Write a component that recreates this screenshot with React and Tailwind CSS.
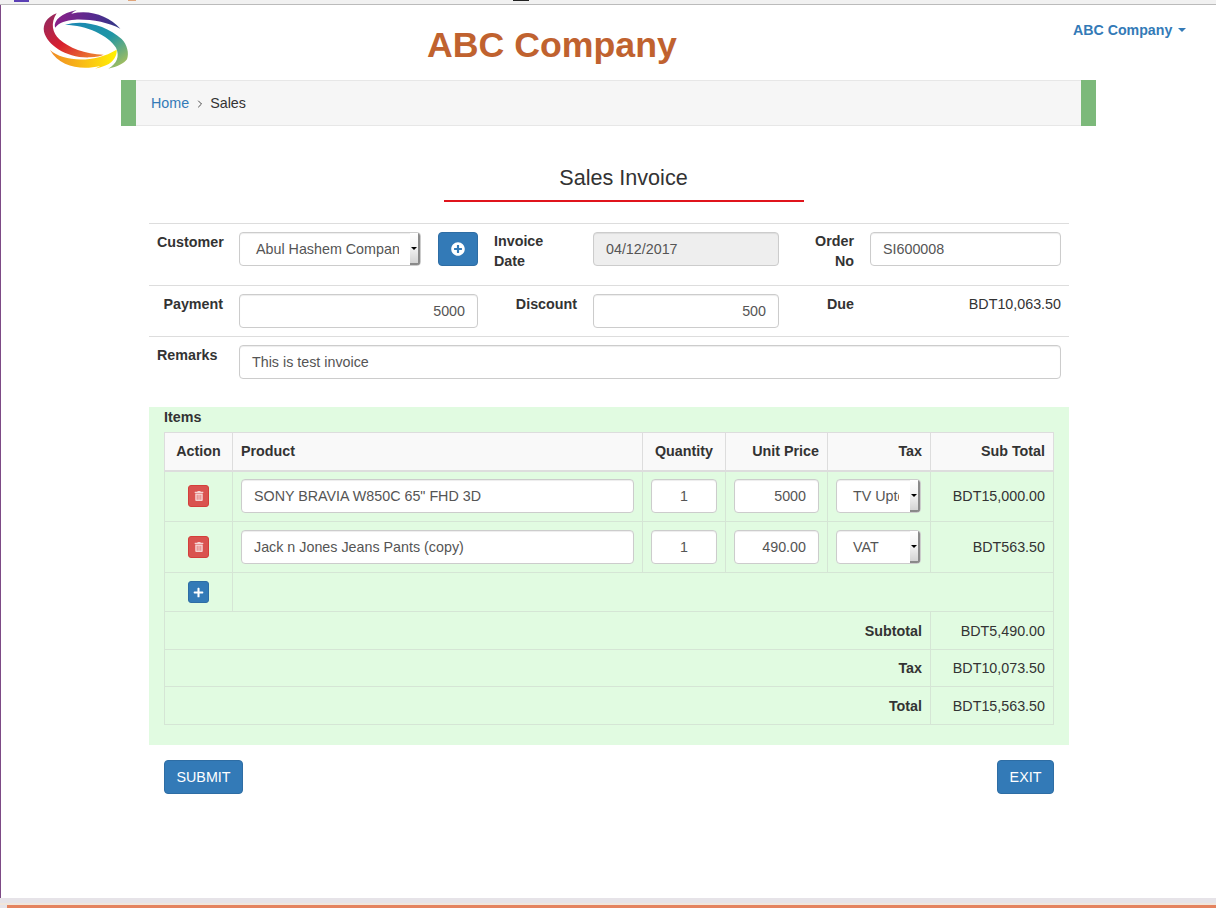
import React from 'react';
import { FaTrashAlt, FaPlus, FaPlusCircle } from 'react-icons/fa';
import { ChevronRight } from 'lucide-react';

const boxCls = 'h-[34px] rounded border border-[#ccc] px-3 text-[14.3px] leading-[32px] text-[#555] shadow-[inset_0_1px_1px_rgba(0,0,0,0.075)]';
const inputCls = `${boxCls} bg-white`;
const labelCls = 'text-[14.3px] font-bold leading-[20px] text-[#333]';
const cellCls = 'border border-[#d5e5d5] px-2';
const textCellCls = 'border border-[#d5e5d5] px-2 text-right text-[14.3px] leading-[20px] text-[#333]';
const blueBtnCls = 'flex h-[34px] items-center justify-center rounded border border-[#2e6da4] bg-[#337ab7] pt-px text-[14.3px] text-white';

function Logo() {
  return (
    <svg width="95" height="70" viewBox="0 0 285 210" className="block">
      <defs>
        <linearGradient id="lgTop" x1="0" y1="0" x2="1" y2="0">
          <stop offset="0" stopColor="#8a2088" />
          <stop offset="0.6" stopColor="#552a8f" />
          <stop offset="1" stopColor="#2f3a86" />
        </linearGradient>
        <linearGradient id="lgRight" x1="0" y1="0" x2="1" y2="1">
          <stop offset="0" stopColor="#1a86b4" />
          <stop offset="0.5" stopColor="#1f96a6" />
          <stop offset="1" stopColor="#bcc650" />
        </linearGradient>
        <linearGradient id="lgLeft" x1="0" y1="0" x2="1" y2="1">
          <stop offset="0" stopColor="#8c2a66" />
          <stop offset="0.5" stopColor="#d81f2e" />
          <stop offset="1" stopColor="#f09030" />
        </linearGradient>
        <linearGradient id="lgBottom" x1="0" y1="0" x2="1" y2="0">
          <stop offset="0" stopColor="#f08a25" />
          <stop offset="0.75" stopColor="#fdd60e" />
          <stop offset="1" stopColor="#fff200" />
        </linearGradient>
      </defs>
      <path d="M45 68 C40 45 65 25 110 15 C103 19 98 22 94 26 C150 12 205 32 241 71 C205 52 150 42 105 44 C78 46 58 52 45 68 Z" fill="url(#lgTop)" />
      <path d="M75 60 C130 42 200 62 245 102 C262 120 268 145 261 163 C252 176 232 185 205 191 C230 175 240 155 228 128 C205 92 140 60 75 60 Z" fill="url(#lgRight)" />
      <path d="M50 25 C20 36 8 58 12 80 C22 120 80 160 150 157 C170 156 182 153 191 149 C135 148 85 128 58 103 C38 85 30 55 50 25 Z" fill="url(#lgLeft)" />
      <path d="M30 135 C70 170 160 176 230 134 C232 150 222 170 198 181 C188 185 176 189 165 191 C172 188 176 186 180 183 C125 196 60 187 30 135 Z" fill="url(#lgBottom)" />
    </svg>
  );
}

function SelectBox({ width, children }) {
  return (
    <div className={`flex h-[34px] ${width} items-stretch overflow-hidden rounded border border-[#ccc] bg-white text-[14.3px] leading-[32px] text-[#555] shadow-[inset_0_1px_1px_rgba(0,0,0,0.075)]`}>
      <div className="mr-[11px] min-w-0 flex-1 overflow-hidden whitespace-nowrap pl-4">{children}</div>
      <div className="flex w-[10px] flex-none items-center justify-center border-r-2 border-b-2 border-[#8a8a8a] bg-gradient-to-b from-white via-[#f2f2f2] to-[#d4d4d4]">
        <div className="h-0 w-0 border-x-[3px] border-t-[3px] border-x-transparent border-t-black" />
      </div>
    </div>
  );
}

function IconButton({ color, children }) {
  return (
    <div className={`flex h-[22px] w-[21px] items-center justify-center rounded-[3px] border ${color} text-white`}>
      {children}
    </div>
  );
}

function ItemRow({ product, qty, price, tax, total }) {
  return (
    <tr className="h-[51px]">
      <td className={cellCls}>
        <div className="flex justify-center">
          <IconButton color="border-[#d43f3a] bg-[#d9534f]">
            <FaTrashAlt className="text-[10px] opacity-75" />
          </IconButton>
        </div>
      </td>
      <td className={cellCls}>
        <div className={`${inputCls} whitespace-nowrap`}>{product}</div>
      </td>
      <td className={cellCls}>
        <div className={`${inputCls} text-center`}>{qty}</div>
      </td>
      <td className={cellCls}>
        <div className={`${inputCls} text-right`}>{price}</div>
      </td>
      <td className={cellCls}>
        <SelectBox width="w-[85px]">{tax}</SelectBox>
      </td>
      <td className={textCellCls}>{total}</td>
    </tr>
  );
}

function TotalRow({ label, value, height }) {
  return (
    <tr className={height}>
      <td colSpan={5} className={`${textCellCls} font-bold`}>{label}</td>
      <td className={textCellCls}>{value}</td>
    </tr>
  );
}

export default function App() {
  return (
    <div className="flex h-[908px] flex-col overflow-hidden bg-white font-['Liberation_Sans',Arial,sans-serif]">
      {/* browser leftovers along the top edge */}
      <div className="flex h-[5px] flex-none items-start border-b border-[#bbb] bg-[#f1f1f1]">
        <span className="ml-[14px] h-[2px] w-[15px] bg-[#5b3fb5]" />
        <span className="ml-[99px] h-[1px] w-[8px] bg-[#e0a57a]" />
        <span className="ml-[377px] h-[1px] w-[16px] bg-[#222]" />
      </div>

      <div className="min-h-0 flex-1 border-l border-[#7d4a86]">
        <header className="flex h-[75px] items-start">
          <div className="ml-[39px] w-[95px] flex-none">
            <Logo />
          </div>
          <h1 className="ml-[292px] mt-[18px] w-[251px] flex-none whitespace-nowrap text-[35.7px] font-bold leading-[44px] text-[#c0622f]">
            ABC Company
          </h1>
          <div className="ml-[395px] mt-[15px] flex flex-none items-center gap-[6px] whitespace-nowrap text-[14.2px] font-bold leading-[20px] text-[#337ab7]">
            ABC Company
            <span className="h-0 w-0 border-x-4 border-t-4 border-x-transparent border-t-[#337ab7]" />
          </div>
        </header>

        <div className="ml-[120px] w-[975px]">
          <nav className="border-x-[15px] border-[#7cb97a]">
            <div className="flex h-[46px] items-center border-y border-[#e7e7e7] bg-[#f6f6f6] pl-[15px] pt-px text-[14.3px] text-[#333]">
              <span className="text-[#337ab7]">Home</span>
              <ChevronRight size={12} strokeWidth={1.75} className="ml-[5px] mr-[4px] text-[#333]" />
              <span>Sales</span>
            </div>
          </nav>

          <div className="mt-[37px] flex justify-center pl-[30px]">
            <h2 className="w-[360px] border-b-2 border-[#e0141c] pb-[7px] text-center text-[21.6px] leading-[30px] text-[#333]">
              Sales Invoice
            </h2>
          </div>

          <div className="ml-[28px] mt-[21px] w-[920px]">
            <div className="flex h-[62px] border-t border-[#ddd] pt-[8px]">
              <div className={`${labelCls} ml-[8px] w-[82px]`}>Customer</div>
              <SelectBox width="w-[182px]">Abul Hashem Company</SelectBox>
              <div className="ml-[17px] flex h-[34px] w-[40px] items-center justify-center rounded border border-[#2e6da4] bg-[#337ab7] text-[14px] text-white">
                <FaPlusCircle />
              </div>
              <div className={`${labelCls} ml-[16px] -mt-[1px] w-[99px]`}>Invoice<br />Date</div>
              <div className={`${boxCls} w-[186px] bg-[#eee]`}>04/12/2017</div>
              <div className={`${labelCls} -mt-[1px] w-[75px] text-right`}>Order<br />No</div>
              <div className={`${inputCls} ml-[16px] w-[191px]`}>SI600008</div>
            </div>

            <div className="flex h-[51px] border-t border-[#ddd] pt-[8px]">
              <div className={`${labelCls} w-[74px] text-right`}>Payment</div>
              <div className={`${inputCls} ml-[16px] w-[239px] text-right`}>5000</div>
              <div className={`${labelCls} w-[99px] text-right`}>Discount</div>
              <div className={`${inputCls} ml-[16px] w-[186px] text-right`}>500</div>
              <div className={`${labelCls} w-[75px] text-right`}>Due</div>
              <div className="ml-[16px] w-[191px] text-right text-[14.3px] leading-[20px] text-[#333]">BDT10,063.50</div>
            </div>

            <div className="flex h-[71px] border-t border-[#ddd] pt-[8px]">
              <div className={`${labelCls} ml-[8px] w-[82px]`}>Remarks</div>
              <div className={`${inputCls} w-[822px]`}>This is test invoice</div>
            </div>

            <section className="h-[338px] bg-[#e1fbe1] px-[15px]">
              <div className="h-[21px] text-[14.3px] font-bold leading-[20px] text-[#333]">Items</div>
              <table className="mt-[4px] w-[889px] table-fixed border-collapse">
                <colgroup>
                  <col className="w-[68px]" />
                  <col className="w-[410px]" />
                  <col className="w-[83px]" />
                  <col className="w-[102px]" />
                  <col className="w-[103px]" />
                  <col className="w-[123px]" />
                </colgroup>
                <thead>
                  <tr className="h-[38px] bg-[#f9f9f9] text-[14.3px] font-bold text-[#333]">
                    <th className="border border-b-2 border-[#ddd] px-2 text-center">Action</th>
                    <th className="border border-b-2 border-[#ddd] px-2 text-left">Product</th>
                    <th className="border border-b-2 border-[#ddd] px-2 text-center">Quantity</th>
                    <th className="border border-b-2 border-[#ddd] px-2 text-right">Unit Price</th>
                    <th className="border border-b-2 border-[#ddd] px-2 text-right">Tax</th>
                    <th className="border border-b-2 border-[#ddd] px-2 text-right">Sub Total</th>
                  </tr>
                </thead>
                <tbody>
                  <ItemRow
                    product={`SONY BRAVIA W850C 65" FHD 3D`}
                    qty="1"
                    price="5000"
                    tax="TV Uptodate"
                    total="BDT15,000.00"
                  />
                  <ItemRow
                    product="Jack n Jones Jeans Pants (copy)"
                    qty="1"
                    price="490.00"
                    tax="VAT"
                    total="BDT563.50"
                  />
                  <tr className="h-[39px]">
                    <td className={cellCls}>
                      <div className="flex justify-center">
                        <IconButton color="border-[#2e6da4] bg-[#337ab7]"><FaPlus className="text-[11px]" /></IconButton>
                      </div>
                    </td>
                    <td colSpan={5} className={cellCls} />
                  </tr>
                  <TotalRow label="Subtotal" value="BDT5,490.00" height="h-[38px]" />
                  <TotalRow label="Tax" value="BDT10,073.50" height="h-[37px]" />
                  <TotalRow label="Total" value="BDT15,563.50" height="h-[38px]" />
                </tbody>
              </table>
            </section>

            <div className="mt-[15px] flex justify-between px-[15px]">
              <div className={`${blueBtnCls} w-[79px]`}>SUBMIT</div>
              <div className={`${blueBtnCls} w-[57px]`}>EXIT</div>
            </div>
          </div>
        </div>
      </div>

      <div className="flex-none bg-[#e6e3e8]">
        <div className="h-[5px]" />
        <div className="h-[2px] bg-[#f0e6dc]" />
        <div className="ml-[7px] h-[3px] bg-[#e4835f]" />
      </div>
    </div>
  );
}
